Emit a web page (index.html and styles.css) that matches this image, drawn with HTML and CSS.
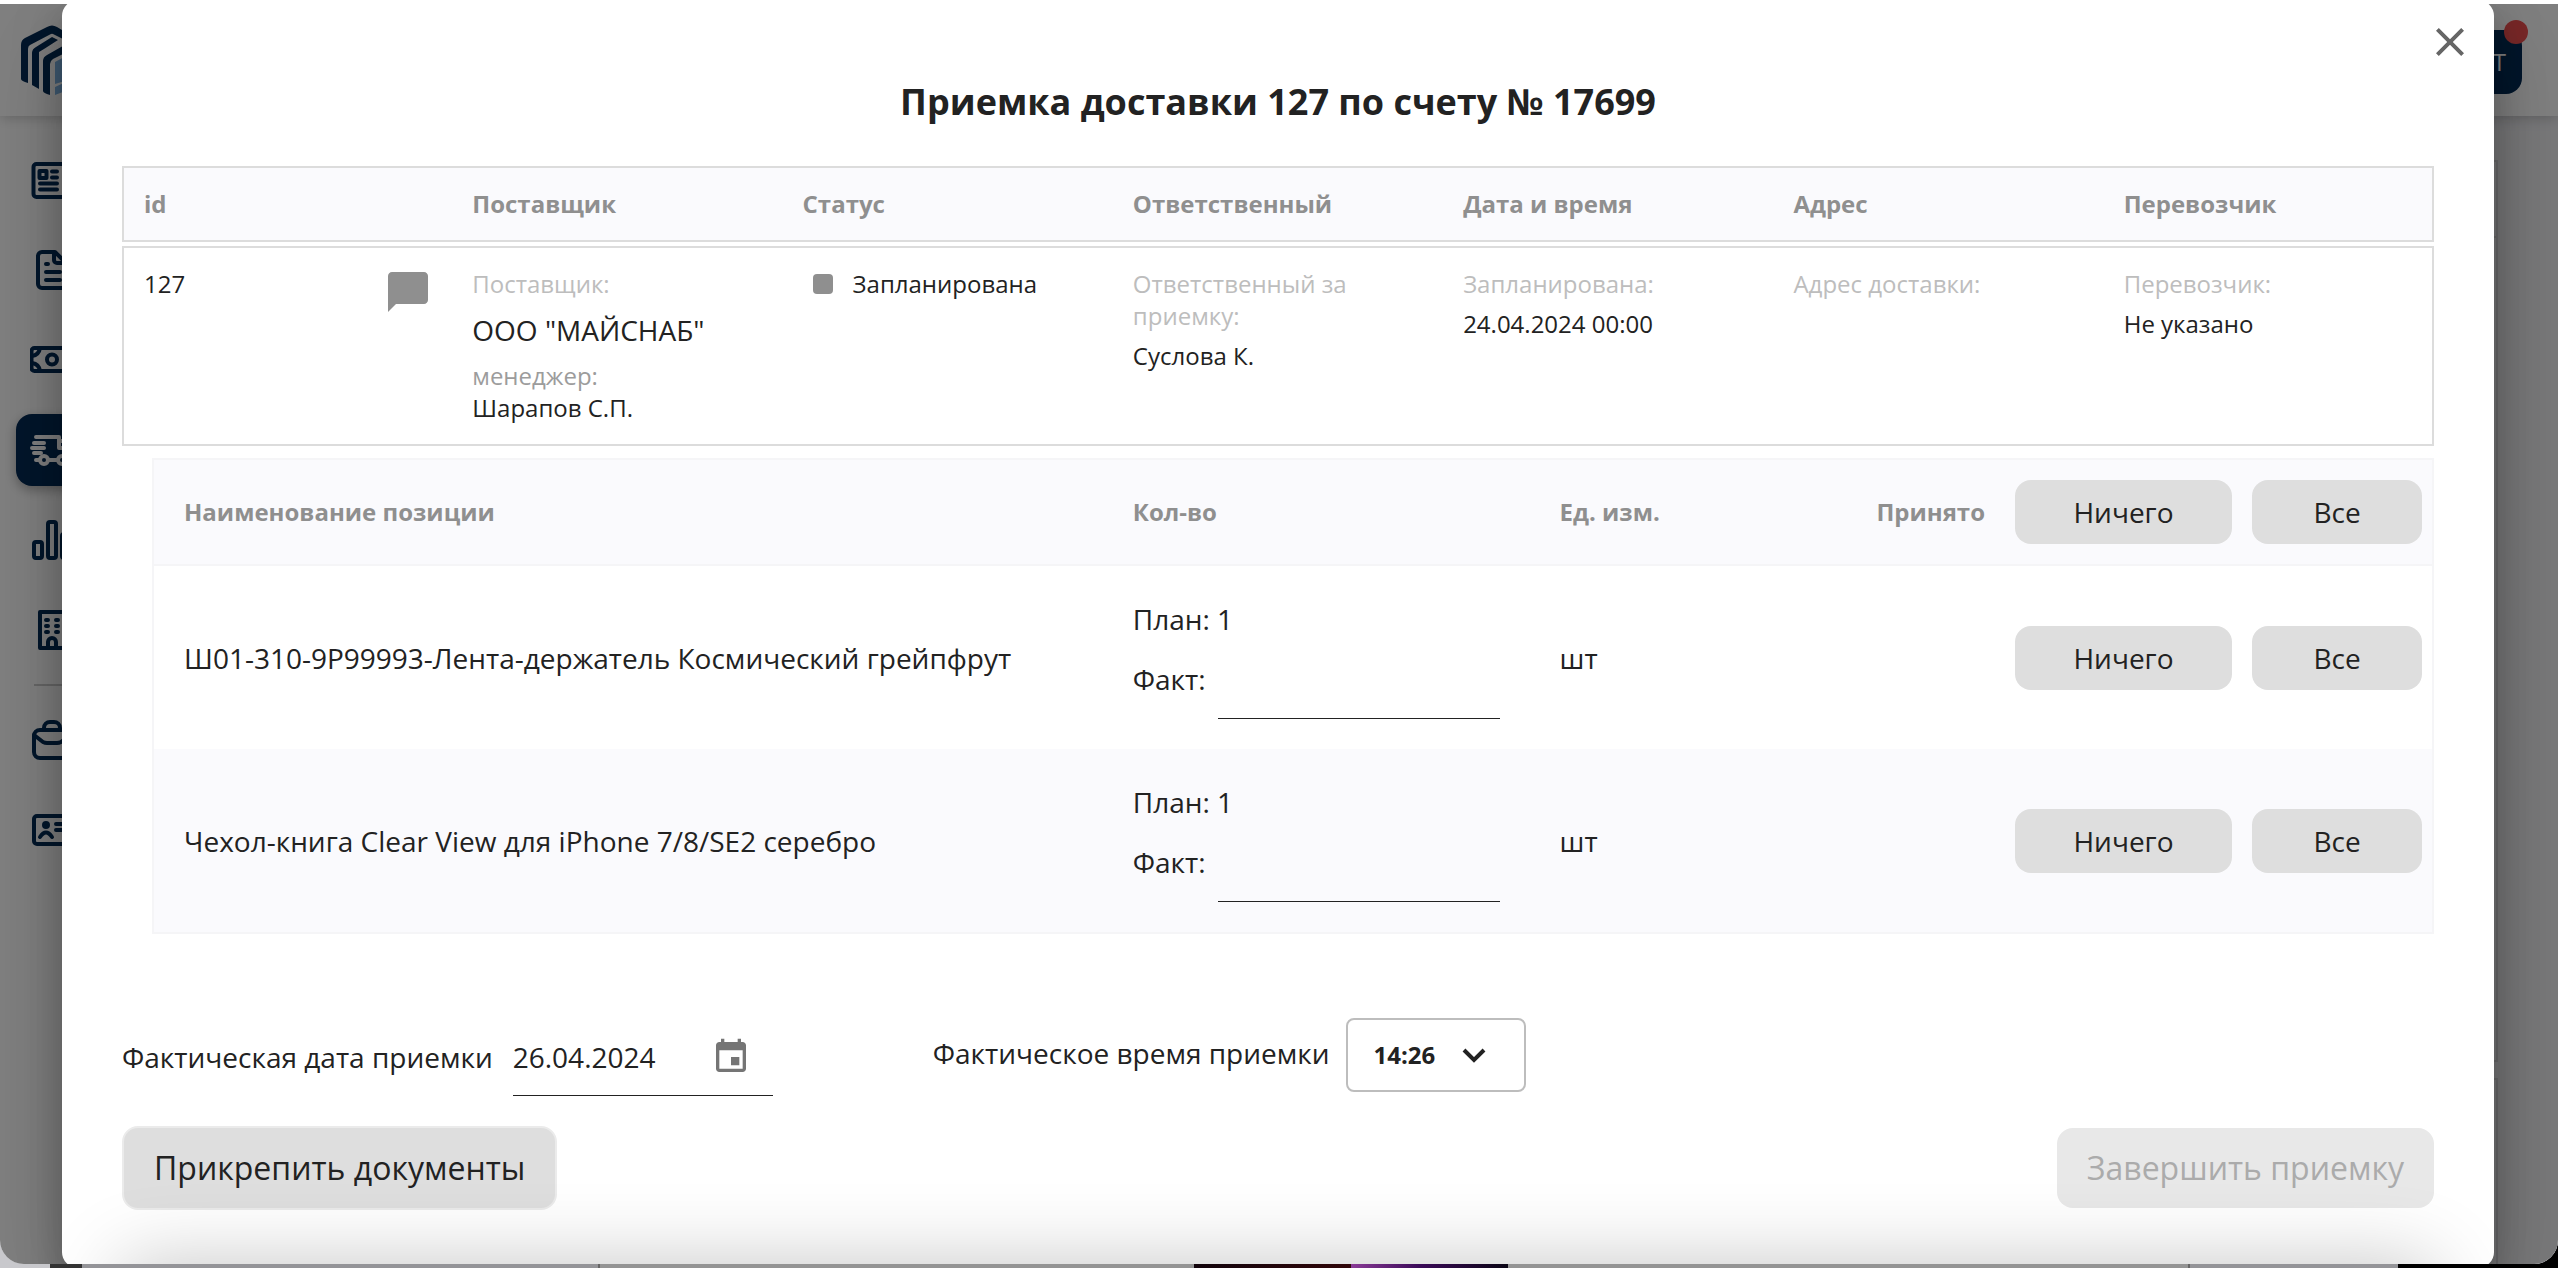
FILE: index.html
```html
<!DOCTYPE html>
<html lang="ru">
<head>
<meta charset="utf-8">
<meta name="viewport" content="width=device-width, initial-scale=1">
<title>Приемка доставки 127 по счету № 17699</title>
<link rel="stylesheet" href="styles.css">
</head>
<body>
<div class="window">
  <div class="app">
    <header class="topbar">
      <svg class="logo" viewBox="0 0 80 80" aria-hidden="true">
        <path class="logo-dark" d="M0 54V20q0-5 4-7L26 2q5-3 10 0l10 6v8L33 9.500q-2-1.500-4 0L9 20q-2 1-2 4v34q-7-2-7-4z"/>
        <path class="logo-dark" d="M11 60V28q0-4 4-6l16-10 6 3-14 9-5 3v37zM22 66V36q0-4 4-6l30-17v9L32 34q-3 2-3 5v31q-7-2-7-4z"/>
        <path class="logo-light" d="M34 37l26-14v28L34 59zM34 62l26-12v10L34 70z"/>
      </svg>
      <button class="avatar" type="button" aria-label="Профиль">Т<span class="avatar-dot"></span></button>
    </header>
    <div class="workspace">
      <nav class="sidebar" aria-label="Разделы">
        <a class="nav-item" href="#" aria-label="Новости"><svg viewBox="0 0 44 44"><rect x="3.500" y="6" width="37" height="33" rx="3"/><rect x="9.500" y="13" width="7" height="7"/><path d="M22 13.500h5M22 19.500h5M10 25.500h17M10 31.500h17"/></svg></a>
        <a class="nav-item" href="#" aria-label="Документы"><svg viewBox="0 0 44 44"><path d="M25 4H12a4 4 0 0 0-4 4v28a4 4 0 0 0 4 4h20a4 4 0 0 0 4-4V15zM24 5v7a3 3 0 0 0 3 3h8M16 16h2M16 24h14M16 32h14"/></svg></a>
        <a class="nav-item" href="#" aria-label="Финансы"><svg viewBox="0 0 44 44"><rect x="1.500" y="10" width="41" height="23" rx="3"/><circle cx="22" cy="21.500" r="5"/><path d="M2 18q7-1 8-8M2 25q7 1 8 8M42 18q-7-1-8-8"/></svg></a>
        <a class="nav-item nav-item-active" href="#" aria-label="Доставки"><svg viewBox="0 0 44 44"><path d="M6 9h23v11h13M29 13h7l6 8v11h-6M4 15h10M2 20h12M4 25h7M6 32h4M18 32h9"/><circle cx="14" cy="32" r="4"/><circle cx="32" cy="32" r="4"/></svg></a>
        <a class="nav-item" href="#" aria-label="Отчеты"><svg viewBox="0 0 44 44"><rect x="4" y="24" width="8" height="16" rx="2"/><rect x="18" y="4" width="8" height="36" rx="2"/><rect x="32" y="16" width="8" height="24" rx="2"/></svg></a>
        <a class="nav-item" href="#" aria-label="Склады"><svg viewBox="0 0 44 44"><path d="M10 4h26v36H10zM16 12h2M26 12h2M16 18h2M26 18h2M16 24h2M26 24h2M18 40v-6a4 4 0 0 1 8 0v6"/></svg></a>
        <hr class="nav-divider">
        <a class="nav-item" href="#" aria-label="Портфель"><svg viewBox="0 0 44 44"><rect x="4" y="12" width="36" height="28" rx="6"/><path d="M14 11v-1a6 6 0 0 1 6-6h4a6 6 0 0 1 6 6v1M4 17l9 7q2 1 4 1h10q2 0 4-1l9-7"/></svg></a>
        <a class="nav-item" href="#" aria-label="Контакты"><svg viewBox="0 0 44 44"><rect x="4" y="8" width="36" height="28" rx="3"/><circle cx="16" cy="17" r="2"/><path d="M10 29q6-9 12 0M26 16h8M26 22h8"/></svg></a>
      </nav>
      <main class="content">
        <div class="panel"><div class="panel-head"></div></div>
        <div class="panel panel-short"></div>
      </main>
    </div>
  </div>

  <div class="overlay">
    <section class="dialog" role="dialog" aria-labelledby="dialog-title">
      <button class="close" type="button" aria-label="Закрыть">
        <svg viewBox="0 0 24 24"><path d="M19 6.400 17.600 5 12 10.600 6.400 5 5 6.400 10.600 12 5 17.600 6.400 19 12 13.400 17.600 19 19 17.600 13.400 12z"/></svg>
      </button>
      <h1 class="title" id="dialog-title">Приемка доставки 127 по счету № 17699</h1>

      <table class="delivery">
        <thead>
          <tr><th>id</th><th>Поставщик</th><th>Статус</th><th>Ответственный</th><th>Дата и время</th><th>Адрес</th><th>Перевозчик</th></tr>
        </thead>
        <tbody>
          <tr>
            <td>
              <div class="id-cell">
                <span>127</span>
                <button class="comment" type="button" aria-label="Комментарий"><svg viewBox="0 0 24 24"><path d="M20 2H4c-1.100 0-2 .9-2 2v18l4-4h14c1.100 0 2-.9 2-2V4c0-1.100-.9-2-2-2z"/></svg></button>
              </div>
            </td>
            <td>
              <div class="caption">Поставщик:</div>
              <div class="supplier">ООО "МАЙСНАБ"</div>
              <div class="caption-dark">менеджер:</div>
              <div>Шарапов С.П.</div>
            </td>
            <td><div class="status"><span class="status-dot"></span>Запланирована</div></td>
            <td><div class="caption">Ответственный за приемку:</div><div class="value">Суслова К.</div></td>
            <td><div class="caption">Запланирована:</div><div class="value">24.04.2024 00:00</div></td>
            <td><div class="caption">Адрес доставки:</div></td>
            <td><div class="caption">Перевозчик:</div><div class="value">Не указано</div></td>
          </tr>
        </tbody>
      </table>

      <table class="items">
        <colgroup><col class="col-name"><col class="col-qty"><col class="col-unit"><col></colgroup>
        <thead>
          <tr>
            <th>Наименование позиции</th>
            <th>Кол-во</th>
            <th>Ед. изм.</th>
            <th><div class="actions"><span class="accepted">Принято</span><button class="btn btn-none" type="button">Ничего</button><button class="btn btn-all" type="button">Все</button></div></th>
          </tr>
        </thead>
        <tbody>
          <tr>
            <td>Ш01-310-9Р99993-Лента-держатель Космический грейпфрут</td>
            <td><div>План: 1</div><div class="fact"><label for="fact-1">Факт:</label><input class="fact-input" id="fact-1" type="text"></div></td>
            <td>шт</td>
            <td><div class="actions"><button class="btn btn-none" type="button">Ничего</button><button class="btn btn-all" type="button">Все</button></div></td>
          </tr>
          <tr>
            <td>Чехол-книга Clear View для iPhone 7/8/SE2 серебро</td>
            <td><div>План: 1</div><div class="fact"><label for="fact-2">Факт:</label><input class="fact-input" id="fact-2" type="text"></div></td>
            <td>шт</td>
            <td><div class="actions"><button class="btn btn-none" type="button">Ничего</button><button class="btn btn-all" type="button">Все</button></div></td>
          </tr>
        </tbody>
      </table>

      <div class="moment">
        <div class="date-group">
          <label for="date">Фактическая дата приемки</label>
          <div class="date-field">
            <input class="date-input" id="date" type="text" value="26.04.2024">
            <button class="calendar" type="button" aria-label="Выбрать дату"><svg viewBox="0 0 24 24"><path d="M17 12h-5v5h5v-5zM16 1v2H8V1H6v2H5c-1.110 0-2 .9-2 2v14c0 1.100.9 2 2 2h14c1.100 0 2-.9 2-2V5c0-1.100-.9-2-2-2h-1V1h-2zm3 18H5V8h14v11z"/></svg></button>
          </div>
        </div>
        <div class="time-group">
          <label for="time">Фактическое время приемки</label>
          <div class="time-field">
            <select class="time-select" id="time"><option>14:26</option></select>
            <svg class="chevron" viewBox="0 0 26 16" aria-hidden="true"><path d="M3 3l10 10L23 3"/></svg>
          </div>
        </div>
      </div>

      <div class="footer">
        <button class="btn-large btn-attach" type="button">Прикрепить документы</button>
        <button class="btn-large btn-finish" type="button" disabled>Завершить приемку</button>
      </div>
    </section>
  </div>
</div>
<div class="desktop" aria-hidden="true"></div>
</body>
</html>
```
FILE: styles.css
```css
* { box-sizing: border-box; }

body {
  margin: 0;
  padding-top: 4px;
  min-height: 100vh;
  display: flex;
  flex-direction: column;
  background: linear-gradient(90deg, #c8c8cc 0 50%, #000 50%);
  font: 24px/32px "Open Sans", "Noto Sans", sans-serif;
  color: #222;
  box-shadow: inset 0 4px #fff;
}

button, input, select { font: inherit; color: inherit; }
button { border: 0; padding: 0; background: none; cursor: pointer; }
svg { display: block; }

.window {
  flex: 1;
  display: grid;
  overflow: hidden;
  border-radius: 0 0 24px 24px;
}

.app, .overlay { grid-area: 1 / 1; min-width: 0; }

/* strip of the desktop under the window */
.desktop {
  height: 4px;
  background: linear-gradient(90deg,
    #c8c8cc 0 50px, #333 50px 82px, #949498 82px 598px, #666 598px 600px,
    #949494 600px 1194px, #12040c 1194px, #300508 1351px, #8a3a96 1351px,
    #3a0a58 1420px, #0a0514 1508px, #949494 1508px 2188px, #666 2188px 2190px,
    #949498 2190px 2398px, #000 2398px);
}

/* page behind the dialog */
.app { display: flex; flex-direction: column; background: #fff; }

.topbar {
  display: flex;
  justify-content: space-between;
  align-items: center;
  height: 112px;
  padding: 4px 36px 0 21px;
  box-shadow: 0 2px 12px rgba(0, 0, 0, .2);
  z-index: 1;
}

.logo { width: 80px; height: 80px; margin-top: 6px; }
.logo-dark { fill: #062c56; }
.logo-light { fill: #7fb4e4; }

.avatar {
  position: relative;
  width: 64px;
  height: 64px;
  padding-right: 16px;
  border-radius: 16px;
  background: #062c56;
  color: #fff;
  text-align: right;
}

.avatar-dot {
  position: absolute;
  top: -10px;
  right: -6px;
  width: 24px;
  height: 24px;
  border-radius: 50%;
  background: #f05050;
}

.workspace { flex: 1; display: flex; }

.sidebar {
  display: flex;
  flex-direction: column;
  gap: 18px;
  width: 104px;
  padding: 28px 16px;
}

.nav-item {
  display: grid;
  place-items: center;
  height: 72px;
  border-radius: 16px;
  color: #062c56;
}

.nav-item svg {
  width: 44px;
  height: 44px;
  fill: none;
  stroke: currentColor;
  stroke-width: 4;
  stroke-linecap: round;
  stroke-linejoin: round;
}

.nav-item-active { background: #062c56; color: #fff; box-shadow: 0 4px 12px rgba(0, 0, 0, .3); }
.nav-divider { width: 100%; height: 2px; margin: 0; border: 0; border-left: 18px solid transparent; background: #ccc; background-clip: padding-box; }

.content {
  flex: 1;
  display: flex;
  flex-direction: column;
  gap: 16px;
  padding: 44px 60px 0 20px;
  background: #f0f0f3;
}

.panel { flex: 1; border: 2px solid #d4d4d8; }
.panel-head { height: 76px; border-bottom: 2px solid #d4d4d8; }
.panel-short { flex: 0 0 186px; border-bottom: 0; }

/* dialog */
.overlay { display: flex; background: rgba(0, 0, 0, .5); z-index: 2; }

.dialog {
  position: relative;
  flex: 1;
  min-width: 0;
  margin: -4px 64px -4px 62px;
  padding: 78px 60px 58px;
  overflow: hidden;
  border-radius: 16px;
  background: #fff;
  box-shadow: 0 22px 30px 4px rgba(0, 0, 0, .15), 0 48px 76px 6px rgba(0, 0, 0, .14), 0 0 60px rgba(0, 0, 0, .1);
}

.dialog::after {
  content: "";
  position: absolute;
  left: 60px;
  right: 60px;
  bottom: -200px;
  height: 204px;
  box-shadow: 0 0 80px rgba(0, 0, 0, .23);
  pointer-events: none;
}

.close { position: absolute; top: 18px; right: 20px; }
.close svg { width: 48px; height: 48px; fill: #666; }

.title { margin: 0 0 36px; font-size: 36px; line-height: 48px; font-weight: 700; text-align: center; }

table { table-layout: fixed; border-spacing: 0; }
th, td { text-align: left; }
th { color: #8f8f8f; font-weight: 700; }

.delivery { width: 100%; border-spacing: 0 4px; }
.delivery th, .delivery td { padding: 20px; border: solid #dcdcdc; border-width: 2px 0; vertical-align: top; }
.delivery th:first-child, .delivery td:first-child { border-left-width: 2px; }
.delivery th:last-child, .delivery td:last-child { border-right-width: 2px; }
.delivery th { background: #fafafd; }

.id-cell { display: flex; justify-content: space-between; align-items: flex-start; }
.comment svg { width: 48px; height: 48px; fill: #8f8f8f; }
.caption { color: #bdbdbd; }
.caption-dark { color: #9c9c9c; }
.supplier { margin: 8px 0; font-size: 28px; line-height: 44px; }
.value { margin-top: 8px; }
.status { display: flex; align-items: center; gap: 20px; padding-left: 10px; }
.status-dot { width: 20px; height: 20px; border-radius: 4px; background: #8f8f8f; }

.items {
  width: calc(100% - 30px);
  margin: 8px 0 84px 30px;
  border: 2px solid #f5f5f7;
  font-size: 28px;
  line-height: 40px;
}

.col-name { width: 42%; }
.col-qty { width: 19%; }
.col-unit { width: 12%; }
.items th, .items td { padding: 0 22px; }
.items th:first-child, .items td:first-child { padding-left: 30px; }
.items th:nth-child(3), .items td:nth-child(3) { padding-left: 16px; }
.items th:last-child, .items td:last-child { padding: 0 10px 0 0; }
.items th { height: 106px; background: #fafafd; border-bottom: 2px solid #f5f5f7; font-size: 24px; }
.items td:nth-child(2) { padding-top: 33px; padding-bottom: 30px; }
.items tbody tr:nth-child(even) { background: #fafafd; }

.fact { display: flex; align-items: center; gap: 12px; }
.fact-input { flex: 1; min-width: 0; max-width: 282px; height: 80px; border: 0; border-bottom: 1px solid #222; background: none; outline: 0; }

.actions { display: flex; justify-content: flex-end; align-items: center; gap: 20px; }
.accepted { margin-right: 10px; }
.btn { height: 64px; border-radius: 16px; background: #dedede; font-size: 28px; font-weight: 400; color: #222; text-align: center; }
.btn-none { width: 217px; }
.btn-all { width: 170px; }

.moment { display: flex; gap: 160px; font-size: 28px; line-height: 40px; }
.date-group { display: flex; align-items: center; gap: 20px; }
.date-field { display: flex; align-items: center; width: 260px; height: 78px; border-bottom: 1px solid #222; }
.date-input { flex: 1; min-width: 0; padding: 0; border: 0; background: none; outline: 0; }
.calendar { margin-right: 22px; }
.calendar svg { width: 40px; height: 40px; fill: #757575; }

.time-group { display: flex; align-items: baseline; gap: 16px; }
.time-field { position: relative; }
.time-select {
  appearance: none;
  width: 180px;
  height: 74px;
  padding: 0 26px;
  border: 2px solid #bdbdbd;
  border-radius: 8px;
  background: #fff;
  font-size: 24px;
  font-weight: 700;
}
.chevron { position: absolute; top: 29px; right: 39px; width: 26px; height: 16px; fill: none; stroke: #222; stroke-width: 4; pointer-events: none; }

.footer { display: flex; justify-content: space-between; align-items: center; margin-top: 30px; }
.btn-large { height: 80px; padding: 0 30px; border-radius: 16px; font-size: 32px; }
.btn-attach { height: 84px; border: 2px solid #ebebeb; background: #dedede; }
.btn-finish { background: #e8e8e8; color: #ababab; }
```
